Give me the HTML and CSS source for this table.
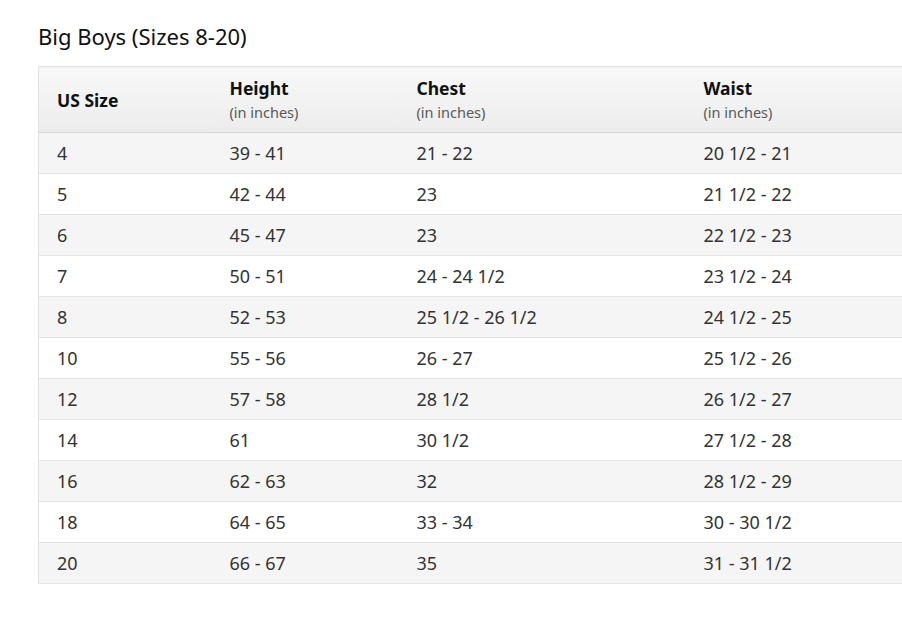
FILE: index.html
```html
<!DOCTYPE html>
<html>
<head>
<meta charset="utf-8">
<link rel="stylesheet" href="styles.css">
</head>
<body>
<div class="page">
  <h2 class="title">Big Boys (Sizes 8-20)</h2>
  <table class="size-table">
    <colgroup>
      <col class="c1"><col class="c2"><col class="c3"><col class="c4">
    </colgroup>
    <thead>
      <tr>
        <th><span class="hname">US Size</span></th>
        <th><span class="hname">Height</span><span class="unit">(in inches)</span></th>
        <th><span class="hname">Chest</span><span class="unit">(in inches)</span></th>
        <th><span class="hname">Waist</span><span class="unit">(in inches)</span></th>
      </tr>
    </thead>
    <tbody>
      <tr><td>4</td><td>39 - 41</td><td>21 - 22</td><td>20 1/2 - 21</td></tr>
      <tr><td>5</td><td>42 - 44</td><td>23</td><td>21 1/2 - 22</td></tr>
      <tr><td>6</td><td>45 - 47</td><td>23</td><td>22 1/2 - 23</td></tr>
      <tr><td>7</td><td>50 - 51</td><td>24 - 24 1/2</td><td>23 1/2 - 24</td></tr>
      <tr><td>8</td><td>52 - 53</td><td>25 1/2 - 26 1/2</td><td>24 1/2 - 25</td></tr>
      <tr><td>10</td><td>55 - 56</td><td>26 - 27</td><td>25 1/2 - 26</td></tr>
      <tr><td>12</td><td>57 - 58</td><td>28 1/2</td><td>26 1/2 - 27</td></tr>
      <tr><td>14</td><td>61</td><td>30 1/2</td><td>27 1/2 - 28</td></tr>
      <tr><td>16</td><td>62 - 63</td><td>32</td><td>28 1/2 - 29</td></tr>
      <tr><td>18</td><td>64 - 65</td><td>33 - 34</td><td>30 - 30 1/2</td></tr>
      <tr><td>20</td><td>66 - 67</td><td>35</td><td>31 - 31 1/2</td></tr>
    </tbody>
  </table>
</div>
</body>
</html>
```
FILE: styles.css
```css
html, body {
  margin: 0;
  padding: 0;
  background: #fff;
  overflow: hidden;
}
body {
  font-family: "Noto Sans", "Open Sans", sans-serif;
  color: #0f1111;
}
.page {
  padding: 22px 0 0 38px;
  width: 1000px;
}
.title {
  margin: 0 0 16px 0;
  font-size: 22px;
  font-weight: 400;
  line-height: 28px;
  color: #0f1111;
}
.size-table {
  border-collapse: collapse;
  table-layout: fixed;
  width: 950px;
  border-left: 1px solid #e3e3e3;
}
.c1 { width: 173px; }
.c2 { width: 187px; }
.c3 { width: 287px; }
.c4 { width: 303px; }
.size-table th {
  height: 65px;
  padding: 0 0 0 18px;
  text-align: left;
  vertical-align: middle;
  background: linear-gradient(#f8f8f8, #ececec);
  border-top: 1px solid #e3e3e3;
  border-bottom: 1px solid #d8d8d8;
}
.hname {
  display: block;
  font-size: 17.5px;
  font-weight: 700;
  line-height: 24px;
  color: #0f1111;
}
.unit {
  display: block;
  font-size: 14.5px;
  font-weight: 400;
  line-height: 24px;
  color: #565959;
}
.size-table td {
  height: 40px;
  padding: 0 0 0 18px;
  font-size: 18px;
  line-height: 22px;
  color: #333;
  border-bottom: 1px solid #e3e3e3;
  vertical-align: middle;
}
.size-table tbody tr:nth-child(odd) td {
  background: #f5f5f5;
}
```
